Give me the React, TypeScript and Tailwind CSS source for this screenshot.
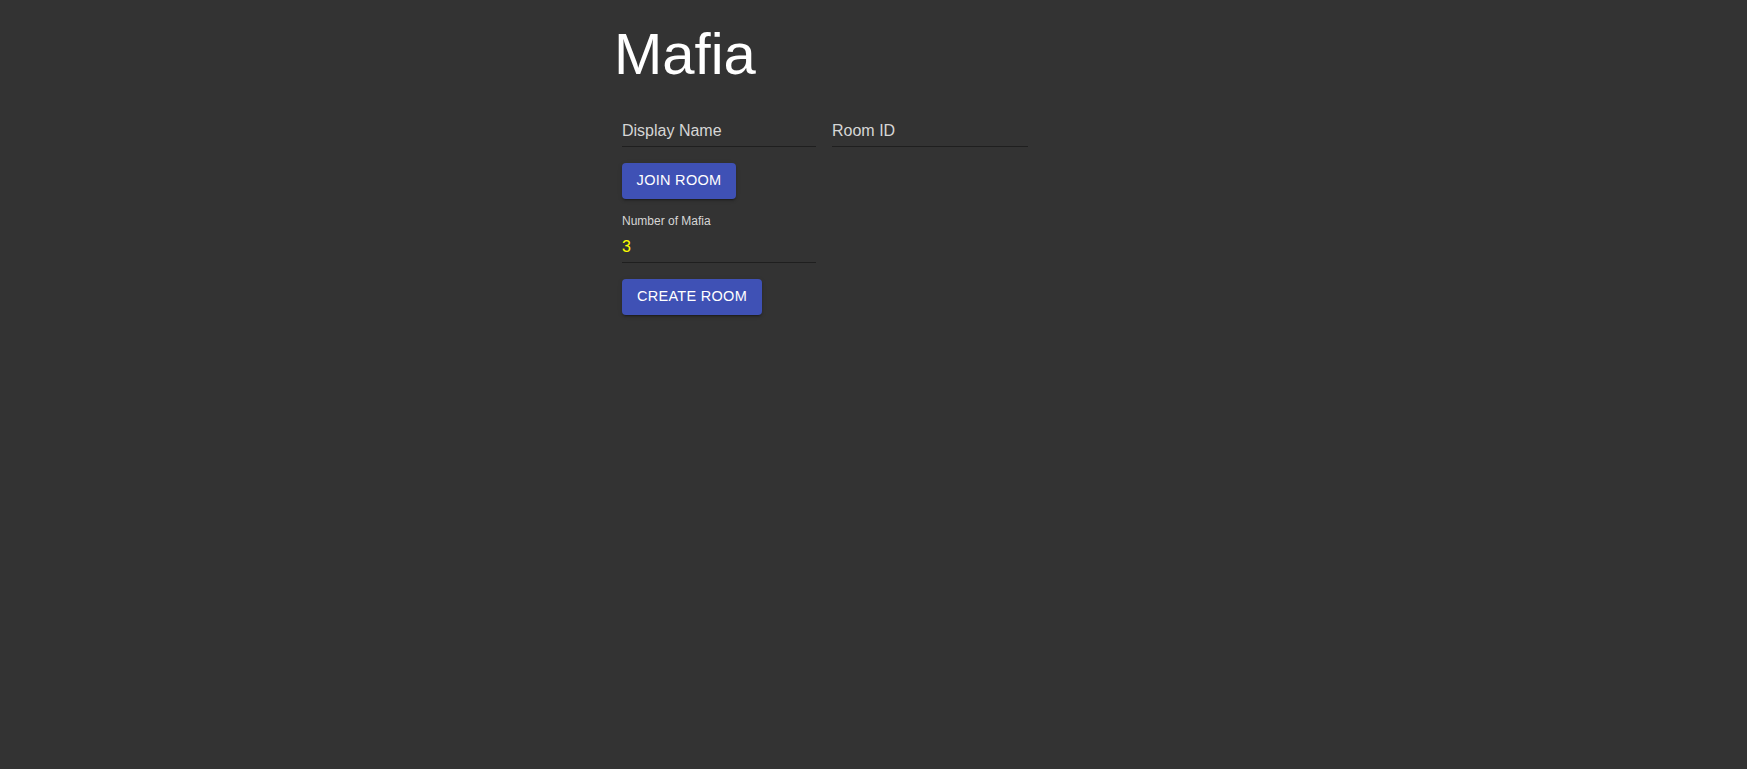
import { useState } from "react";

function UnderlineField({
  label,
  width,
  value,
  onChange,
}: {
  label: string;
  width: string;
  value: string;
  onChange: (v: string) => void;
}) {
  return (
    <label className={`${width} block border-b border-[#1f1f1f] pb-[5px]`}>
      <input
        value={value}
        onChange={(e) => onChange(e.target.value)}
        placeholder={label}
        className="block h-[20px] w-full bg-transparent p-0 text-[16px] leading-[20px] text-[#d6d6d6] placeholder:text-[#d6d6d6] outline-none"
      />
    </label>
  );
}

const BUTTON =
  "h-9 flex items-center justify-center rounded bg-[#3f51b5] text-[14.5px] tracking-[0.02em] uppercase text-white shadow-[0_3px_1px_-2px_rgba(0,0,0,0.2),0_2px_2px_0_rgba(0,0,0,0.14),0_1px_5px_0_rgba(0,0,0,0.12)]";

export default function App() {
  const [name, setName] = useState("");
  const [room, setRoom] = useState("");
  const [mafia, setMafia] = useState("3");

  return (
    <div className="min-h-screen bg-[#333333] pl-[614px] pt-[25px] font-['Liberation_Sans',Arial,sans-serif]">
      <h1 className="text-[58px] leading-[58px] text-white">Mafia</h1>

      <div className="pl-2">
        <div className="mt-[38px] flex gap-4">
          <UnderlineField label="Display Name" width="w-[194px]" value={name} onChange={setName} />
          <UnderlineField label="Room ID" width="w-[196px]" value={room} onChange={setRoom} />
        </div>

        <button className={`${BUTTON} mt-4 w-[114px]`}>Join Room</button>

        <div className="mt-[15px] w-[194px] border-b border-[#1f1f1f] pb-[5px]">
          <div className="text-[12px] leading-[14px] text-[#d6d6d6]">Number of Mafia</div>
          <input
            value={mafia}
            onChange={(e) => setMafia(e.target.value)}
            className="mt-2 block h-[21px] w-full bg-transparent p-0 text-[16px] leading-[21px] text-[#ffff00] outline-none"
          />
        </div>

        <button className={`${BUTTON} mt-4 w-[140px]`}>Create Room</button>
      </div>
    </div>
  );
}
